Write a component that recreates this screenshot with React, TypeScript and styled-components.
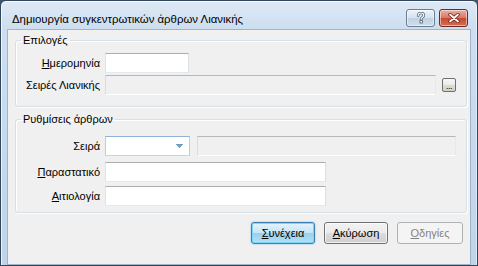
import React from "react";
import styled, { createGlobalStyle } from "styled-components";

const Global = createGlobalStyle`
  html, body { margin: 0; padding: 0; background: #3f556c; }
  body { font-family: "Liberation Sans", Arial, sans-serif; font-size: 11px; color: #000; }
  * { box-sizing: border-box; }
`;

const Window = styled.div`
  width: 478px;
  height: 266px;
  display: flex;
  flex-direction: column;
  border: 1px solid #33475c;
  border-radius: 6px 6px 0 0;
  background: linear-gradient(180deg, #dfe9f5 0px, #cddef0 28px, #c5d8ed 60%, #bfd4ea 100%);
  box-shadow: inset 1px 1px 0 rgba(255,255,255,0.7), inset -1px 0 0 rgba(255,255,255,0.5);
  overflow: hidden;
`;

const TitleBar = styled.div`
  height: 28px;
  display: flex;
  align-items: flex-start;
  padding: 0 9px 0 11px;
`;

const TitleText = styled.div`
  flex: 1;
  font-family: "Liberation Sans", Arial, sans-serif;
  font-size: 11.4px;
  line-height: 16px;
  padding-top: 10px;
  color: #000;
  white-space: nowrap;
`;

const CaptionButtons = styled.div`
  display: flex;
  gap: 4px;
  padding-top: 8px;
`;

const CaptionButton = styled.div<{ $close?: boolean }>`
  width: 29px;
  height: 18px;
  border: 1px solid ${p => (p.$close ? "#6e2a22" : "#6a7d92")};
  border-radius: 3px;
  display: flex;
  align-items: center;
  justify-content: center;
  background: ${p =>
    p.$close
      ? "linear-gradient(180deg, #eab0a2 0%, #da7865 48%, #c54a33 52%, #d66e50 100%)"
      : "linear-gradient(180deg, #edf3f9 0%, #d7e2ee 48%, #c2d1e2 52%, #d0dcea 100%)"};
  box-shadow: inset 0 0 0 1px rgba(255,255,255,0.5);
`;

const Client = styled.div`
  flex: 1;
  margin: 0 6px;
  border: 1px solid #9fb4cb;
  background: #f0f0f0;
  padding: 0 3px 0 7px;
  display: flex;
  flex-direction: column;
`;

const Group = styled.fieldset<{ $top: number }>`
  margin: ${p => p.$top}px 0 0 0;
  padding: 0;
  border: 1px solid #d5dfe5;
  border-radius: 3px;
  box-shadow: inset 1px 1px 0 #fff, 1px 1px 0 #fff;
  min-width: 0;
`;

const Legend = styled.legend`
  margin-left: 5px;
  padding: 0 2px;
  font-size: 11px;
  line-height: 13px;
  color: #000;
`;

const Rows = styled.div<{ $pt: number; $pb: number }>`
  display: flex;
  flex-direction: column;
  padding-top: ${p => p.$pt}px;
  padding-bottom: ${p => p.$pb}px;
`;

const Row = styled.div<{ $mt?: number }>`
  display: flex;
  align-items: center;
  height: 20px;
  margin-top: ${p => p.$mt ?? 0}px;
`;

const Label = styled.div`
  width: 85px;
  padding-right: 1px;
  margin-right: 4px;
  text-align: right;
  white-space: nowrap;
  line-height: 13px;
`;

const U = styled.span`
  text-decoration: underline;
  text-underline-offset: 1px;
`;

const TextBox = styled.div<{ $w: number; $disabled?: boolean }>`
  width: ${p => p.$w}px;
  height: 20px;
  background: ${p => (p.$disabled ? "#f0f0f0" : "#ffffff")};
  border: 1px solid;
  border-color: ${p =>
    p.$disabled ? "#b5b8bb #e8e8e8 #ffffff #dcdcdc" : "#abadb3 #dbdfe6 #e3e9ef #e2e3ea"};
`;

const Combo = styled.div`
  width: 85px;
  height: 20px;
  background: #fff;
  border: 1px solid;
  border-color: #8fb3d4 #b7cfe4 #c3d7ea #b7cfe4;
  display: flex;
  align-items: center;
  justify-content: flex-end;
  padding-right: 6px;
`;

const EllipsisButton = styled.div`
  width: 14px;
  height: 14px;
  margin-left: 6px;
  border: 1px solid #6f6f6f;
  border-radius: 2px;
  background: linear-gradient(180deg, #f7f7f7 0%, #ebebeb 50%, #dcdcdc 51%, #d0d0d0 100%);
  display: flex;
  align-items: flex-end;
  justify-content: center;
  font-size: 9px;
  line-height: 8px;
  letter-spacing: -0.5px;
  color: #000;
  padding-bottom: 1px;
`;

const Spacer = styled.div<{ $w: number }>`
  width: ${p => p.$w}px;
  flex: none;
`;

const ButtonBar = styled.div`
  display: flex;
  justify-content: flex-end;
  margin-top: 9px;
  margin-right: 4px;
  gap: 9px;
`;

const Button = styled.div<{ $variant?: "default" | "disabled"; $w: number }>`
  width: ${p => p.$w}px;
  height: 22px;
  border-radius: 3px;
  display: flex;
  align-items: center;
  justify-content: center;
  font-size: 11px;
  border: 1px solid
    ${p => (p.$variant === "default" ? "#3c7fb1" : p.$variant === "disabled" ? "#adb2b5" : "#707070")};
  color: ${p => (p.$variant === "disabled" ? "#838383" : "#000")};
  background: ${p =>
    p.$variant === "default"
      ? "linear-gradient(180deg, #e5f4fc 0%, #c4e5f6 50%, #98d1ef 51%, #b5dff4 100%)"
      : p.$variant === "disabled"
      ? "#f4f4f4"
      : "linear-gradient(180deg, #f2f2f2 0%, #ebebeb 50%, #dddddd 51%, #cfcfcf 100%)"};
  box-shadow: ${p =>
    p.$variant === "default"
      ? "inset 0 0 0 1px #7fd4f8, 0 0 2px rgba(60,170,230,0.7)"
      : p.$variant === "disabled"
      ? "none"
      : "inset 0 0 0 1px rgba(255,255,255,0.7)"};
`;

function Question() {
  return (
    <svg width="10" height="12" viewBox="0 0 10 12">
      <path
        d="M2.2 3.6 C2.2 1.6 3.6 1 5 1 C6.6 1 7.8 1.9 7.8 3.3 C7.8 4.6 6.8 5 6 5.6 C5.4 6 5.2 6.4 5.2 7.2"
        fill="none"
        stroke="#4a5c70"
        strokeWidth="2.6"
        strokeLinecap="round"
      />
      <path
        d="M2.2 3.6 C2.2 1.6 3.6 1 5 1 C6.6 1 7.8 1.9 7.8 3.3 C7.8 4.6 6.8 5 6 5.6 C5.4 6 5.2 6.4 5.2 7.2"
        fill="none"
        stroke="#ffffff"
        strokeWidth="1.2"
        strokeLinecap="round"
      />
      <rect x="4" y="8.6" width="2.4" height="2.4" fill="#ffffff" stroke="#4a5c70" strokeWidth="0.8" />
    </svg>
  );
}

function CloseX() {
  return (
    <svg width="12" height="10" viewBox="0 0 12 10">
      <path d="M2 1.5 L10 8.5 M10 1.5 L2 8.5" stroke="#6b1f14" strokeWidth="3.4" strokeLinecap="round" />
      <path d="M2 1.5 L10 8.5 M10 1.5 L2 8.5" stroke="#ffffff" strokeWidth="1.8" strokeLinecap="round" />
    </svg>
  );
}

function DropArrow() {
  return (
    <svg width="7" height="4" viewBox="0 0 7 4">
      <path d="M0.3 0.3 L6.7 0.3 L3.5 3.7 Z" fill="#6fa6c9" stroke="#3d7ba3" strokeWidth="0.6" />
    </svg>
  );
}

export default function App() {
  return (
    <>
      <Global />
      <Window>
        <TitleBar>
          <TitleText>Δημιουργία συγκεντρωτικών άρθρων Λιανικής</TitleText>
          <CaptionButtons>
            <CaptionButton>
              <Question />
            </CaptionButton>
            <CaptionButton $close>
              <CloseX />
            </CaptionButton>
          </CaptionButtons>
        </TitleBar>
        <Client>
          <Group $top={4}>
            <Legend>Επιλογές</Legend>
            <Rows $pt={6} $pb={11}>
              <Row>
                <Label>
                  <U>Η</U>μερομηνία
                </Label>
                <TextBox $w={84} />
              </Row>
              <Row $mt={2}>
                <Label>Σειρές Λιανικής</Label>
                <TextBox $w={331} $disabled />
                <EllipsisButton>...</EllipsisButton>
              </Row>
            </Rows>
          </Group>
          <Group $top={6}>
            <Legend>Ρυθμίσεις άρθρων</Legend>
            <Rows $pt={10} $pb={6}>
              <Row>
                <Label>Σειρά</Label>
                <Combo>
                  <DropArrow />
                </Combo>
                <Spacer $w={7} />
                <TextBox $w={259} $disabled />
              </Row>
              <Row $mt={6}>
                <Label>
                  <U>Π</U>αραστατικό
                </Label>
                <TextBox $w={221} />
              </Row>
              <Row $mt={4}>
                <Label>
                  <U>Α</U>ιτιολογία
                </Label>
                <TextBox $w={221} />
              </Row>
            </Rows>
          </Group>
          <ButtonBar>
            <Button $variant="default" $w={64}>
              <span>
                <U>Σ</U>υνέχεια
              </span>
            </Button>
            <Button $w={64}>
              <span>
                <U>Α</U>κύρωση
              </span>
            </Button>
            <Button $variant="disabled" $w={66}>
              <span>
                <U>Ο</U>δηγίες
              </span>
            </Button>
          </ButtonBar>
        </Client>
      </Window>
    </>
  );
}
